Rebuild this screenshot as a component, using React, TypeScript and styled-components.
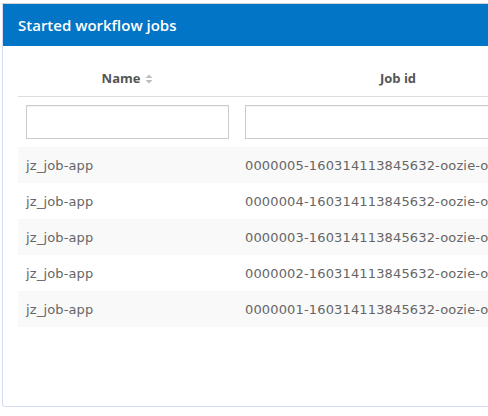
import styled, { createGlobalStyle } from "styled-components";

interface Job {
  id: string;
  name: string;
}

const jobs: Job[] = [5, 4, 3, 2, 1].map((n) => ({
  id: `000000${n}-160314113845632-oozie-oozi-W`,
  name: "jz_job-app",
}));

function App() {
  return (
    <>
      <GlobalStyle />
      <Card>
        <CardHeader>Started workflow jobs</CardHeader>
        <CardBody>
          <Table>
            <colgroup>
              <col style={{ width: 219 }} />
              <col style={{ width: 322 }} />
            </colgroup>
            <thead>
              <tr>
                <HeadCell>
                  Name
                  <SortIcon viewBox="0 0 8 10">
                    <path d="M4 0.5 L7.5 4 H0.5 Z M4 9.5 L7.5 6 H0.5 Z" />
                  </SortIcon>
                </HeadCell>
                <HeadCell>Job id</HeadCell>
              </tr>
              <tr>
                <FilterCell>
                  <FilterInput />
                </FilterCell>
                <FilterCell>
                  <FilterInput />
                </FilterCell>
              </tr>
            </thead>
            <tbody>
              {jobs.map((job, i) => (
                <Row key={job.id} $striped={i % 2 === 0}>
                  <Cell>{job.name}</Cell>
                  <Cell>{job.id}</Cell>
                </Row>
              ))}
            </tbody>
          </Table>
        </CardBody>
      </Card>
    </>
  );
}

const GlobalStyle = createGlobalStyle`
  body {
    margin: 0;
    background: #fff;
    overflow: hidden;
    font-family: "Open Sans", "DejaVu Sans", sans-serif;
  }
`;

const Card = styled.div`
  box-sizing: border-box;
  margin: 3px 0 0 2px;
  width: 720px;
  height: 404px;
  border: 1px solid #d5dbf5;
  border-top-color: #d0d3da;
  border-radius: 0 0 3px 3px;
  box-shadow: 5px 5px 0 #e9e9e9;
  overflow: hidden;
  background: #fff;
`;

const CardHeader = styled.div`
  height: 42px;
  padding-left: 15px;
  background: #0275c6;
  color: #fff;
  font-size: 15px;
  font-weight: 600;
  line-height: 42px;
`;

const CardBody = styled.div`
  padding: 14px 15px 0;
`;

const Table = styled.table`
  border-collapse: collapse;
  table-layout: fixed;
  width: 541px;
`;

const HeadCell = styled.th`
  height: 36px;
  padding: 0 8px;
  text-align: center;
  vertical-align: middle;
  color: #555;
  font-size: 13px;
  font-weight: 700;
  border-bottom: 1px solid #ddd;
`;

const SortIcon = styled.svg`
  width: 8px;
  height: 10px;
  margin-left: 5px;
  vertical-align: -1px;
  fill: #bdbdbd;
`;

const FilterCell = styled.td`
  padding: 8px;
`;

const FilterInput = styled.input`
  box-sizing: border-box;
  display: block;
  width: 100%;
  height: 34px;
  border: 1px solid #ccc;
  box-shadow: inset 0 1px 1px rgba(0, 0, 0, 0.05);
  background: #fff;
`;

const Row = styled.tr<{ $striped: boolean }>`
  background: ${({ $striped }) => ($striped ? "#f9f9f9" : "#fff")};
  & + & td {
    border-top: 1px solid #ddd;
  }
`;

const Cell = styled.td`
  box-sizing: border-box;
  height: 36px;
  padding: 0 8px;
  color: #666;
  font-family: "DejaVu Sans", sans-serif;
  font-size: 13px;
  letter-spacing: 0.15px;
  white-space: nowrap;
  overflow: hidden;
  vertical-align: middle;
`;

export default App;
